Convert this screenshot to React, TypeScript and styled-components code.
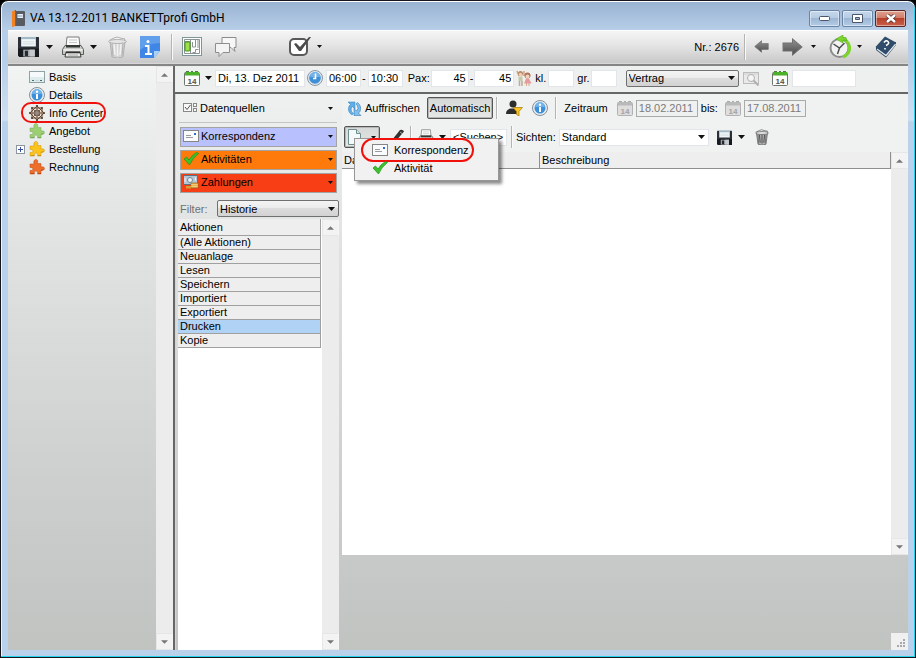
import React from "react";
import styled, { createGlobalStyle, css } from "styled-components";

const ui = '"Liberation Sans", Arial, sans-serif';

const GlobalStyle = createGlobalStyle`
  *, *::before, *::after { box-sizing: border-box; }
  html, body { margin: 0; padding: 0; background: #000; }
  body, button, input, select, table { font: 11px/14px ${ui}; color: #000; }
  button { padding: 0; border: 0; background: none; text-align: left; white-space: nowrap; cursor: pointer; }
  svg { display: block; flex: none; }
`;

/* ---------- window frame ---------- */

const Frame = styled.div`
  display: flex;
  flex-direction: column;
  height: 100vh;
  padding: 0 7px 7px;
  border: 1px solid #16161c;
  border-radius: 8px 8px 0 0;
  background: linear-gradient(#98b2d1 0, #b7cee8 29px, #b7cee8 60px, #cfe0f1 119px, #b9d1ea 121px);
  box-shadow: inset 0 1px #fff, inset -1px -1px #22d3ee, inset 1px 0 #eef6fc;
  overflow: hidden;
`;

const TitleBar = styled.header`
  display: flex;
  flex: none;
  align-items: center;
  height: 29px;
  padding: 5px 2px 0 4px;
`;

const Title = styled.h1`
  flex: 1;
  margin: 0 0 0 5px;
  font: 12px/16px Roboto, "Open Sans", sans-serif;
  white-space: nowrap;
`;

const CaptionButton = styled.button<{ $close?: boolean }>`
  display: grid;
  place-items: center;
  width: 31px;
  height: 17px;
  margin-left: 2px;
  border: 1px solid ${(p) => (p.$close ? "#5b2626" : "#6c84a3")};
  border-radius: 2px;
  background: ${(p) =>
    p.$close
      ? "linear-gradient(#e0a08f, #d07d68 48%, #b8402a 50%, #c9604a)"
      : "linear-gradient(#c5d8ec, #b6cbe3 48%, #9cb7d4 50%, #b4cce6)"};
  box-shadow: inset 0 0 0 1px rgba(255, 255, 255, 0.45);
`;

const Client = styled.div`
  display: flex;
  flex: 1;
  flex-direction: column;
  min-height: 0;
  background: #fff;
`;

const MainToolbar = styled.div`
  display: flex;
  flex: none;
  align-items: center;
  height: 36px;
  padding: 0 11px 2px 10px;
  border-top: 1px solid #fff;
  border-bottom: 2px solid #858585;
  background: linear-gradient(#f5f5f5, #e4e4e4 45%, #c9c9c9 95%, #dcdcdc);
`;

const IconButton = styled.button<{ $ml?: number }>`
  display: grid;
  place-items: center;
  flex: none;
  margin-left: ${(p) => p.$ml ?? 0}px;
`;

const Separator = styled.span<{ $ml?: number; $h?: number }>`
  flex: none;
  width: 1px;
  height: ${(p) => p.$h ?? 22}px;
  margin-left: ${(p) => p.$ml ?? 0}px;
  background: #b4b4b4;
  box-shadow: 1px 0 #fafafa;
`;

const Label = styled.span<{ $ml?: number; $dim?: boolean }>`
  flex: none;
  margin-left: ${(p) => p.$ml ?? 0}px;
  white-space: nowrap;
  color: ${(p) => (p.$dim ? "#707070" : "#000")};
`;

const RecordNumber = styled(Label)`
  margin-left: auto;
  margin-right: 5px;
`;

/* ---------- body ---------- */

const Body = styled.div`
  display: flex;
  flex: 1;
  min-height: 0;
  background: linear-gradient(#f1f4f3, #e5e8e7 20%, #c9cbca 80%, #c1c3c1);
`;

const TreePane = styled.nav`
  display: flex;
  flex: none;
  width: 165px;
`;

const Tree = styled.ul`
  flex: 1;
  margin: 0;
  padding: 2px 0 0;
  list-style: none;
`;

const TreeItem = styled.li`
  display: grid;
  grid-template-columns: 9px auto;
  gap: 4px;
  align-items: center;
  height: 18px;
  padding-left: 8px;
`;

const TreeLink = styled.button<{ $marked?: boolean }>`
  position: relative;
  display: flex;
  align-items: center;
  justify-self: start;
  gap: 4px;
  height: 18px;
  ${(p) =>
    p.$marked &&
    css`
      &::after {
        content: "";
        position: absolute;
        inset: -2px -3px -1px -8px;
        border: 2px solid #f0110c;
        border-radius: 10px;
      }
    `}
`;

const Expander = styled.button`
  display: grid;
  place-items: center;
  width: 9px;
  height: 9px;
  border: 1px solid #8c96a0;
  background: #fff;
`;

const ScrollTrack = styled.div`
  display: flex;
  flex: none;
  flex-direction: column;
  justify-content: space-between;
  width: 17px;
  background: #ececec;
`;

const ScrollButton = styled.button`
  display: grid;
  place-items: center;
  width: 17px;
  height: 17px;
  border: 1px solid #e6e6e6;
  border-right-color: #f6f6f6;
  background: #f3f3f3;
`;

const Main = styled.main`
  display: flex;
  flex: 1;
  flex-direction: column;
  min-width: 0;
  border-left: 2px solid #666;
`;

const DateBar = styled.div`
  display: flex;
  flex: none;
  align-items: center;
  height: 28px;
  padding: 0 8px 2px 9px;
  border-bottom: 2px solid #666;
  background: #eef0ef;
`;

const Field = styled.input<{ $w: number; $ml?: number; $right?: boolean; $framed?: boolean }>`
  flex: none;
  width: ${(p) => p.$w}px;
  height: 17px;
  margin: 0 0 0 ${(p) => p.$ml ?? 0}px;
  padding: 0 2px;
  border: 1px solid ${(p) => (p.$framed ? "#a9abaa" : "#e2e5e9")};
  border-radius: 0;
  outline: 0;
  background: ${(p) => (p.$framed ? "#eff0f0" : "#fff")};
  color: ${(p) => (p.$framed ? "#7b7b7b" : "#000")};
  text-align: ${(p) => (p.$right ? "right" : "left")};
  &::placeholder { color: #000; opacity: 1; }
`;

const SelectBox = styled.span<{ $w: number; $ml?: number }>`
  display: grid;
  flex: none;
  align-items: center;
  width: ${(p) => p.$w}px;
  margin-left: ${(p) => p.$ml ?? 0}px;
  & > * { grid-area: 1 / 1; }
  & > svg { justify-self: end; margin-right: 4px; pointer-events: none; }
`;

const Select = styled.select<{ $plain?: boolean }>`
  appearance: none;
  width: 100%;
  height: 17px;
  padding: 0 14px 0 2px;
  outline: 0;
  border: 1px solid ${(p) => (p.$plain ? "#e2e5e9" : "#707070")};
  border-radius: ${(p) => (p.$plain ? 0 : 2)}px;
  background: ${(p) => (p.$plain ? "#fff" : "linear-gradient(#f4f4f4, #ebebeb 48%, #dcdcdc 50%, #d2d2d2)")};
`;

const Panels = styled.div`
  display: flex;
  flex: 1;
  min-height: 0;
`;

/* ---------- source panel ---------- */

const SourcePanel = styled.section`
  display: flex;
  flex: none;
  flex-direction: column;
  width: 167px;
  padding: 0 3px 0 2px;
  border-left: 1px solid #d4d4d4;
`;

const SourceHead = styled.button`
  display: flex;
  flex: none;
  align-items: center;
  gap: 3px;
  height: 29px;
  margin: 0 2px 4px 1px;
  padding: 0 4px;
  border-bottom: 1px solid #c3c5c4;
`;

const SourceList = styled.div`
  display: grid;
  flex: none;
  gap: 3px;
  margin: 0 2px;
`;

const SourceButton = styled.button<{ $color: string }>`
  display: flex;
  align-items: center;
  gap: 2px;
  height: 20px;
  padding: 0 3px 2px 2px;
  border: 1px solid #a3a3a3;
  background: ${(p) => p.$color};
`;

const Grow = styled.span`
  flex: 1;
`;

const FilterRow = styled.label`
  display: flex;
  flex: none;
  align-items: center;
  justify-content: space-between;
  height: 19px;
  margin: 6px 0 1px 2px;
`;

const ActionArea = styled.div`
  display: flex;
  flex: 1;
  min-height: 0;
  background: #fff;
`;

const ActionTable = styled.table`
  flex: 1;
  align-self: flex-start;
  margin-right: 1px;
  border-collapse: separate;
  border-spacing: 0;
  border-right: 1px solid #a0a0a0;
  background: #eee;
`;

const ActionHead = styled.th`
  height: 17px;
  padding: 0 2px;
  border-bottom: 1px solid #a0a0a0;
  font-weight: normal;
  text-align: left;
`;

const ActionCell = styled.td<{ $selected: boolean }>`
  height: 14px;
  padding: 0 2px;
  border-bottom: 1px solid #a0a0a0;
  line-height: 13px;
  background: ${(p) => (p.$selected ? "#b0d2f5" : "#eee")};
`;

/* ---------- info center panel ---------- */

const InfoPanel = styled.section`
  display: flex;
  flex: 1;
  flex-direction: column;
  min-width: 0;
`;

const ToolRow = styled.div`
  display: flex;
  flex: none;
  align-items: center;
  height: 28px;
  padding-left: 2px;
  background: #f0f2f1;
`;

const EditRow = styled(ToolRow)`
  height: 30px;
`;

const TextButton = styled.button<{ $pressed?: boolean; $ml?: number }>`
  display: flex;
  flex: none;
  align-items: center;
  gap: 3px;
  height: 22px;
  margin-left: ${(p) => p.$ml ?? 0}px;
  padding: 0 3px;
  ${(p) =>
    p.$pressed &&
    css`
      padding: 0 2px;
      border: 1px solid #555;
      border-radius: 2px;
      background: linear-gradient(#d6d8d7, #e6e8e7);
      box-shadow: inset 0 0 0 1px #b5b5b5;
    `}
`;

const MenuAnchor = styled.div`
  position: relative;
  flex: none;
`;

const NewButton = styled(TextButton)`
  width: 36px;
  padding: 0 3px;
  justify-content: space-between;
`;

const Menu = styled.div`
  position: absolute;
  z-index: 2;
  top: 12px;
  left: 10px;
  width: 145px;
  padding: 2px 0 3px;
  border: 1px solid #979797;
  background: #f1f1f1;
  box-shadow: 3px 3px 3px rgba(0, 0, 0, 0.45);
`;

const MenuItem = styled.button<{ $marked?: boolean }>`
  position: relative;
  display: flex;
  align-items: center;
  gap: 6px;
  width: 100%;
  height: 18px;
  padding-left: 17px;
  ${(p) =>
    p.$marked &&
    css`
      &::after {
        content: "";
        position: absolute;
        inset: -3px 24px -3px 6px;
        border: 2px solid #f0110c;
        border-radius: 12px;
      }
    `}
`;

const ResultArea = styled.div`
  display: flex;
  flex: 1;
  min-height: 0;
`;

const ResultTableWrap = styled.div`
  flex: 1;
  min-width: 0;
  background: #fff;
`;

const ResultTable = styled.table`
  width: 100%;
  table-layout: fixed;
  border-collapse: separate;
  border-spacing: 0;
`;

const ResultHead = styled.th<{ $w?: number }>`
  width: ${(p) => (p.$w ? `${p.$w}px` : "auto")};
  height: 17px;
  padding: 0 2px;
  border-right: 1px solid #8f8f8f;
  border-bottom: 1px solid #8f8f8f;
  background: #eee;
  font-weight: normal;
  text-align: left;
`;

const Footer = styled.footer`
  display: flex;
  flex: none;
  align-items: flex-end;
  justify-content: flex-end;
  height: 95px;
`;

const Grip = styled.span`
  display: grid;
  place-items: end;
  width: 17px;
  height: 17px;
  padding: 2px;
  background: #f0f0f0;
`;

/* ---------- icons ---------- */

const Caret = ({ w = 7, color = "#111" }: { w?: number; color?: string }) => (
  <svg width={w} height={w === 5 ? 3 : 4} viewBox="0 0 8 4" preserveAspectRatio="none">
    <path d="M0 0h8L4 4z" fill={color} />
  </svg>
);

const ScrollArrow = ({ down }: { down?: boolean }) => (
  <svg width="7" height="4" viewBox="0 0 8 4">
    <path d={down ? "M0 0h8L4 4z" : "M0 4h8L4 0z"} fill="#777" />
  </svg>
);

const AppIcon = () => (
  <svg width="13" height="17" viewBox="0 0 13 17">
    <rect x="1" y="1" width="12" height="15" rx="1" fill="#585b61" />
    <path d="M0 1.5 3.5 0v16L0 17z" fill="#f58220" />
    <path d="M3.5 0v16" stroke="#b9510a" />
    <rect x="5.500" y="4" width="5.500" height="4" fill="#e9eef5" />
    <path d="M6 6h4.500" stroke="#7f9cc4" />
  </svg>
);

const Floppy = ({ s }: { s: number }) => (
  <svg width={s} height={s} viewBox="0 0 20 20">
    <path d="M0 1.500q0-.5.500-.5h19q.5 0 .5.500V20H1.500L0 18.500z" fill="#2b3038" />
    <path d="M0 12h20v8H1.500L0 18.500z" fill="#171a1f" />
    <rect x="3" y="1" width="14" height="9" fill="#f1f6f7" />
    <rect x="3" y="1" width="14" height="2" fill="#9fb9c6" />
    <path d="M4.500 5.500h11M4.500 7.500h11" stroke="#d5dfe2" />
    <rect x="5" y="13" width="11" height="6.500" fill="#a9aeb2" />
    <rect x="6.500" y="14" width="3" height="5" fill="#24292f" />
    <rect x="11" y="13" width="5" height="6.500" fill="#c6cacc" />
  </svg>
);

const Printer = ({ s }: { s: number }) => (
  <svg width={s} height={s} viewBox="0 0 22 22">
    <path d="M5 1h12l1 10H4z" fill="#fafafa" stroke="#787c7a" />
    <path d="M7 4h8M7 6.500h8" stroke="#c7c9c7" />
    <path d="M3 9.500h16l2.500 4v5H.5v-5z" fill="#c9ccc6" stroke="#5a5e5b" />
    <path d="M4 9h14v2.500H4z" fill="#343835" />
    <path d="M1.500 14h19" stroke="#f3f5f3" strokeWidth="1.500" />
    <path d="M4 16h14l1 5H3z" fill="#e9eae8" stroke="#3c403d" />
    <path d="M4 16.500h14" stroke="#2f322f" strokeWidth="1.500" />
    <path d="M6 19h10" stroke="#a9aca9" />
  </svg>
);

const Trash = ({ w, h, dark }: { w: number; h: number; dark?: boolean }) => {
  const line = dark ? "#5f5f5f" : "#b1b1b1";
  return (
    <svg width={w} height={h} viewBox="0 0 19 22">
      <path d="M2 6h15l-2 15q-5.500 2-11 0z" fill={dark ? "#b5b5b5" : "#d4d4d4"} stroke={line} />
      <path d="M6 8l1 11M9.500 8v12M13 8l-1 11" stroke={dark ? "#555" : "#f2f2f2"} strokeWidth="1.500" />
      <path d="M4 8l1 12M15 8l-1 12" stroke={line} />
      <path d="M2 4l4-2 3-1 3 1 5 1-1 2H3z" fill="#f3f3f3" stroke={line} />
      <ellipse cx="9.500" cy="5.500" rx="9" ry="2" fill="#e5e5e5" stroke={line} />
    </svg>
  );
};

const NoteInfo = () => (
  <svg width="20" height="22" viewBox="0 0 20 22">
    <path d="M0 0h20v15l-6 7H0z" fill="#3f86e6" />
    <path d="M0 0h20v7Q8 7 0 14z" fill="#619feb" />
    <path d="M20 15l-6 7v-7z" fill="#a8d0f8" />
    <path d="M5 10h3.500v8M5 18h7" stroke="#fff" strokeWidth="2" fill="none" />
    <circle cx="8" cy="5.500" r="1.500" fill="#fff" />
  </svg>
);

const LayoutIcon = () => (
  <svg width="20" height="19" viewBox="0 0 20 19">
    <rect x="0.500" y="0.500" width="19" height="18" fill="#fff" stroke="#7e9695" />
    <path d="M2.500 2.500h15v14h-15zM8.500 2v15M2 4.500h6M10.500 5v5h3V3M16 3v8M10.500 15.500h3v-3h3" fill="none" stroke="#8a9493" />
    <rect x="3" y="5" width="5" height="9" rx="1" fill="#9de04c" stroke="#3e8f19" />
  </svg>
);

const Chat = () => (
  <svg width="22" height="22" viewBox="0 0 22 22">
    <path d="M7 1.500h14v10h-2l1 4-4-4H7z" fill="#f7f7f7" stroke="#8d8d8d" />
    <path d="M.5 7.500h14v9H8l-4 4v-4H.5z" fill="#f3f3f3" stroke="#8d8d8d" />
  </svg>
);

const TaskCheck = () => (
  <svg width="22" height="21" viewBox="0 0 22 21">
    <rect x="1" y="3" width="17" height="16" rx="4" fill="#fff" stroke="#585858" strokeWidth="2" />
    <path d="M5 8l2-1 4 4 9-10h2l-10 14h-2z" fill="#4b4b4b" />
  </svg>
);

const Arrow = ({ right, w }: { right?: boolean; w: number }) => (
  <svg width={w} height={right ? 18 : 13} viewBox="0 0 20 18" preserveAspectRatio="none">
    <defs>
      <linearGradient id={right ? "arR" : "arL"} x1="0" y1="0" x2="0" y2="1">
        <stop offset="0" stopColor="#949494" />
        <stop offset="1" stopColor="#4a4a4a" />
      </linearGradient>
    </defs>
    <path
      d={right ? "M1 5h9V1l9 8-9 8v-4H1z" : "M19 5h-9V1L1 9l9 8v-4h9z"}
      fill={right ? "url(#arR)" : "url(#arL)"}
      stroke="#707070"
    />
  </svg>
);

const HistoryClock = () => (
  <svg width="22" height="24" viewBox="0 0 22 24">
    <circle cx="10.500" cy="13" r="9" fill="#f1f2f1" stroke="#8b8f8b" strokeWidth="2" />
    <path d="M12 3.500a9.500 9.500 0 0 1 2 18.500" fill="none" stroke="#7bd52c" strokeWidth="3" />
    <path d="M7 4l7-4v2.500h3l1 3-4-.5v3z" fill="#7bd52c" stroke="#4a9f12" strokeWidth="0.500" />
    <path d="M4.500 9l6 4 5-5M10.500 13l-2 6" stroke="#4d4d4d" strokeWidth="1.500" fill="none" />
  </svg>
);

const HelpBook = () => (
  <svg width="22" height="22" viewBox="0 0 22 22">
    <path d="M1 11v3l10 7.500L21 9V6z" fill="#29435f" />
    <path d="M2 13l9 6.500L20.500 8" fill="none" stroke="#dfe6ea" strokeWidth="1.500" />
    <path d="M10 .5l11 6-10 11.500L.5 11z" fill="#2f4c6a" />
    <path d="M9 6.500q2-3 4-1t-2 4M10 12v1.500" stroke="#fff" strokeWidth="1.600" fill="none" />
  </svg>
);

const BasisIcon = () => (
  <svg width="16" height="14" viewBox="0 0 16 14">
    <rect x="0.500" y="1.500" width="15" height="11" fill="#dfecee" stroke="#8fa3a6" />
    <path d="M1 2h14v5H1z" fill="#f6fafa" />
    <path d="M3 10.500h2M11 10.500h2" stroke="#4d6b6f" />
    <path d="M6.500 10.500h3" stroke="#c3d3d5" />
  </svg>
);

const InfoRound = () => (
  <svg width="16" height="16" viewBox="0 0 16 16">
    <circle cx="8" cy="8" r="7.500" fill="#eaeef1" stroke="#858f98" />
    <circle cx="8" cy="8" r="5.500" fill="#3c8fd9" />
    <path d="M3 7a5 5 0 0 1 10 0z" fill="#70b3ea" />
    <path d="M8 7v5" stroke="#fff" strokeWidth="2" />
    <circle cx="8" cy="4.800" r="1.200" fill="#fff" />
  </svg>
);

const Wheel = () => (
  <svg width="16" height="16" viewBox="0 0 16 16" fill="none" stroke="#5d4537" strokeWidth="0.900">
    <circle cx="8" cy="8" r="7" fill="#ece0d2" stroke="none" />
    <rect x="3" y="3" width="10" height="10" />
    <rect x="3" y="3" width="10" height="10" transform="rotate(45 8 8)" />
    <path d="M8 1v14M1 8h14M3 3l10 10M13 3L3 13" strokeWidth="0.700" />
    <circle cx="8" cy="8" r="3" />
    <circle cx="8" cy="8" r="1.200" fill="#fff" />
    <g fill="#5d4537" stroke="none">
      {[0, 45, 90, 135, 180, 225, 270, 315].map((a) => (
        <circle key={a} cx="8" cy="1" r="1.100" transform={`rotate(${a} 8 8)`} />
      ))}
    </g>
  </svg>
);

const Puzzle = ({ a, b }: { a: string; b: string }) => (
  <svg width="16" height="16" viewBox="0 0 16 16">
    <path
      d="M1 5h4q-1-4 1.500-4.500Q9.500 0 8.500 4.500h3.500v3.500q3.500-1 3.500 1.500t-3.500 1.500v4H8.500q1-3-1.500-3t-1.500 3H1v-3.500q3 .5 3-1.500T1 8.500z"
      fill={a}
      stroke={b}
      strokeWidth="0.500"
    />
    <path d="M2 14.500h3M9 14.500h3M12 11.500l2.500-1" stroke={b} />
  </svg>
);

const Calendar = ({ off }: { off?: boolean }) => (
  <svg width="16" height="17" viewBox="0 0 16 17">
    <rect x="0.500" y="2.500" width="15" height="13" rx="1" fill={off ? "#dedede" : "#fdfdfd"} stroke={off ? "#b1b1b1" : "#6f746f"} />
    <rect x="1" y="2" width="14" height="3.500" fill={off ? "#b9b9b9" : "#4bb02a"} />
    <path d="M2 1.500h3M7 1.500h2M11 1.500h3" stroke={off ? "#aaa" : "#4f7a45"} />
    <text x="8" y="14" textAnchor="middle" fontFamily="Liberation Sans, sans-serif" fontWeight="bold" fontSize="8" fill={off ? "#a3a3a3" : "#4f5350"}>
      14
    </text>
  </svg>
);

const Clock = () => (
  <svg width="16" height="16" viewBox="0 0 16 16">
    <circle cx="8" cy="8" r="7.500" fill="#dfe7ee" stroke="#8a98a5" />
    <circle cx="8" cy="8" r="5.800" fill="#3e8fd6" />
    <path d="M3 7a5 5 0 0 1 10 0z" fill="#72b2e8" />
    <path d="M8.500 3.500v5H6" stroke="#fff" strokeWidth="1.600" fill="none" />
  </svg>
);

const People = () => (
  <svg width="16" height="17" viewBox="0 0 16 17">
    <path d="M1 1l2 5M8 1v5" stroke="#d2a184" strokeWidth="1.500" />
    <circle cx="4.500" cy="3.500" r="2.500" fill="#b78a68" />
    <circle cx="4.500" cy="4.500" r="1.700" fill="#f2cdb2" />
    <path d="M2.500 6.500h4V11h-4z" fill="#c6c9a5" />
    <path d="M3.500 11v5M6 11v5" stroke="#b9ab96" strokeWidth="1.500" />
    <circle cx="11.500" cy="5.500" r="3" fill="#ab715b" />
    <circle cx="11.500" cy="6.500" r="2" fill="#f4cfb9" />
    <path d="M10 8.500h3l2.500 5H8z" fill="#e89a9d" />
    <path d="M10.500 13v3M13 13v3" stroke="#d8a58d" />
  </svg>
);

const SearchWindow = () => (
  <svg width="17" height="15" viewBox="0 0 17 15">
    <rect x="0.500" y="1.500" width="15" height="11" fill="#e9e9e9" stroke="#bcbcbc" />
    <path d="M1 3h14" stroke="#cfcfcf" />
    <circle cx="8" cy="7" r="3.500" fill="#f5f5f5" stroke="#b0b0b0" />
    <path d="M10.500 9.500l5 5" stroke="#b0b0b0" strokeWidth="2" />
  </svg>
);

const SourceIcon = () => (
  <svg width="14" height="10" viewBox="0 0 14 10" fill="#f8f8f8" stroke="#888">
    <rect x="0.500" y="0.500" width="8" height="8" />
    <path d="M2 4l2 2.500L7.500 2" fill="none" stroke="#555" />
    <rect x="10.500" y="0.500" width="3" height="3" />
    <rect x="10.500" y="5.500" width="3" height="3" />
  </svg>
);

const Mail = () => (
  <svg width="16" height="12" viewBox="0 0 16 12">
    <rect x="0.500" y="0.500" width="15" height="11" fill="#fafbfd" stroke="#858585" />
    <path d="M3 5.500h5M3 7.500h7" stroke="#9b9b9b" />
    <rect x="11" y="3" width="2" height="2" fill="#2f68d0" />
  </svg>
);

const GreenCheck = () => (
  <svg width="16" height="14" viewBox="0 0 16 14">
    <path d="M1 7l2.500-2L6 8Q9 3 13.500.5l2 1Q9.500 6 6.500 13z" fill="#3cc12c" stroke="#1c8f15" strokeWidth="0.700" />
  </svg>
);

const Money = () => (
  <svg width="16" height="14" viewBox="0 0 16 14">
    <rect x="0.500" y="0.500" width="14" height="9" fill="#b6c6d5" stroke="#5e7181" />
    <circle cx="7" cy="5" r="2.500" fill="#eef3f6" stroke="#71879a" />
    <path d="M2 3v4M12.500 2.500v3" stroke="#edf1f4" />
    <path d="M8 8h7v5H8z" fill="#e4b04a" stroke="#97681c" strokeWidth="0.700" />
    <path d="M3 11h5v2.500H3z" fill="#d59a34" />
    <path d="M8 9.700h7M8 11.400h7" stroke="#f8df98" strokeWidth="0.700" />
  </svg>
);

const Refresh = () => (
  <svg width="15" height="15" viewBox="0 0 15 15">
    <path d="M1 1h7v7L5.500 5.500 4 8q0 3 2.500 4.500L5 14Q0 11 2 5L3.500 3.500z" fill="#5faee8" stroke="#2d7cbd" strokeWidth="0.500" />
    <path d="M14 14.500H7v-7L9.500 10 11 7.500Q11 4.500 9 3L10.500 1.500Q15 5 13 10.500L11.500 12z" fill="#7cc0f0" stroke="#2467a5" strokeWidth="0.500" />
  </svg>
);

const UserFilter = () => (
  <svg width="17" height="16" viewBox="0 0 17 16">
    <circle cx="7" cy="4" r="3.500" fill="#2d2d2d" />
    <path d="M0 14q0-5 5-5.500h4q3 .5 4 5.500z" fill="#2d2d2d" />
    <path d="M7 7.500h9.500L13 11.500V16l-2.500-1.500v-3z" fill="#f9c623" stroke="#a57509" strokeWidth="0.700" />
  </svg>
);

const NewPage = () => (
  <svg width="13" height="16" viewBox="0 0 13 16">
    <path d="M0.500 0.500h8l4 4v11H.5z" fill="#f4fafa" stroke="#6f8e8f" />
    <path d="M8.500 .5v4h4" fill="#d3e4e4" stroke="#6f8e8f" />
  </svg>
);

const Pen = () => (
  <svg width="15" height="16" viewBox="0 0 15 16">
    <path d="M10 1q3-1 4 1.500L5 13l-4 2 1-4z" fill="#333" />
    <path d="M10 3l2 1.500" stroke="#aaa" />
  </svg>
);

const Min = () => (
  <svg width="11" height="5" viewBox="0 0 11 5">
    <rect x="0.500" y="0.500" width="10" height="4" rx="1" fill="#fff" stroke="#4b5768" />
  </svg>
);

const Max = () => (
  <svg width="11" height="9" viewBox="0 0 11 9">
    <path d="M.5.500h10v8H.5zM3.500 3.500v2h4v-2z" fill="#fff" fillRule="evenodd" stroke="#4b5768" />
  </svg>
);

const Close = () => (
  <svg width="12" height="9" viewBox="0 0 12 9">
    <path d="M2 1l8 7M10 1L2 8" stroke="#4d3030" strokeWidth="4" />
    <path d="M2 1l8 7M10 1L2 8" stroke="#fff" strokeWidth="2.400" />
  </svg>
);

/* ---------- data ---------- */

const treeItems = [
  { label: "Basis", icon: <BasisIcon /> },
  { label: "Details", icon: <InfoRound /> },
  { label: "Info Center", icon: <Wheel />, marked: true },
  { label: "Angebot", icon: <Puzzle a="#9bcf72" b="#7aa55c" /> },
  { label: "Bestellung", icon: <Puzzle a="#fbc41c" b="#d1910f" />, expandable: true },
  { label: "Rechnung", icon: <Puzzle a="#ee6e2c" b="#bd4b16" /> },
];

const sources = [
  { label: "Korrespondenz", color: "#b8c0fe", icon: <Mail /> },
  { label: "Aktivitäten", color: "#ff7a0a", icon: <GreenCheck /> },
  { label: "Zahlungen", color: "#f83e14", icon: <Money /> },
];

const actions = ["(Alle Aktionen)", "Neuanlage", "Lesen", "Speichern", "Importiert", "Exportiert", "Drucken", "Kopie"];

const Scrollbar = () => (
  <ScrollTrack>
    <ScrollButton aria-label="Nach oben"><ScrollArrow /></ScrollButton>
    <ScrollButton aria-label="Nach unten"><ScrollArrow down /></ScrollButton>
  </ScrollTrack>
);

export default function App() {
  return (
    <>
      <GlobalStyle />
      <Frame>
        <TitleBar>
          <AppIcon />
          <Title>VA 13.12.2011 BANKETTprofi GmbH</Title>
          <CaptionButton aria-label="Minimieren"><Min /></CaptionButton>
          <CaptionButton aria-label="Maximieren"><Max /></CaptionButton>
          <CaptionButton $close aria-label="Schließen"><Close /></CaptionButton>
        </TitleBar>

        <Client>
          <MainToolbar>
            <IconButton aria-label="Speichern"><Floppy s={21} /></IconButton>
            <IconButton $ml={7} aria-label="Speicheroptionen"><Caret /></IconButton>
            <IconButton $ml={9} aria-label="Drucken"><Printer s={22} /></IconButton>
            <IconButton $ml={6} aria-label="Druckoptionen"><Caret /></IconButton>
            <IconButton $ml={11} aria-label="Löschen"><Trash w={19} h={22} /></IconButton>
            <IconButton $ml={13} aria-label="Information"><NoteInfo /></IconButton>
            <Separator $ml={11} $h={26} />
            <IconButton $ml={10} aria-label="Layout"><LayoutIcon /></IconButton>
            <IconButton $ml={13} aria-label="Nachrichten"><Chat /></IconButton>
            <IconButton $ml={52} aria-label="Aufgaben"><TaskCheck /></IconButton>
            <IconButton $ml={6} aria-label="Aufgabenoptionen"><Caret w={5} /></IconButton>
            <RecordNumber>Nr.: 2676</RecordNumber>
            <Separator $h={26} />
            <IconButton $ml={9} aria-label="Zurück"><Arrow w={15} /></IconButton>
            <IconButton $ml={13} aria-label="Weiter"><Arrow right w={21} /></IconButton>
            <IconButton $ml={8} aria-label="Verlauf"><Caret w={5} /></IconButton>
            <IconButton $ml={13} aria-label="Historie"><HistoryClock /></IconButton>
            <IconButton $ml={6} aria-label="Historienoptionen"><Caret w={5} /></IconButton>
            <IconButton $ml={13} aria-label="Hilfe"><HelpBook /></IconButton>
          </MainToolbar>

          <Body>
            <TreePane>
              <Tree>
                {treeItems.map((t) => (
                  <TreeItem key={t.label}>
                    {t.expandable ? (
                      <Expander aria-label="Bestellung aufklappen">
                        <svg width="5" height="5" viewBox="0 0 5 5"><path d="M0 2.500h5M2.500 0v5" stroke="#3a4f9c" /></svg>
                      </Expander>
                    ) : (
                      <span />
                    )}
                    <TreeLink $marked={t.marked}>{t.icon}{t.label}</TreeLink>
                  </TreeItem>
                ))}
              </Tree>
              <Scrollbar />
            </TreePane>

            <Main>
              <DateBar>
                <IconButton aria-label="Kalender"><Calendar /></IconButton>
                <IconButton $ml={5} aria-label="Datum wählen"><Caret /></IconButton>
                <Field $w={90} $ml={3} aria-label="Datum" defaultValue="Di, 13. Dez 2011" />
                <IconButton $ml={2} aria-label="Uhrzeit"><Clock /></IconButton>
                <Field $w={35} $ml={3} aria-label="Beginn" defaultValue="06:00" />
                <Label $ml={1}>-</Label>
                <Field $w={35} $ml={2} aria-label="Ende" defaultValue="10:30" />
                <Label $ml={5} as="label" htmlFor="pax">Pax:</Label>
                <Field id="pax" $w={38} $ml={1} $right defaultValue="45" />
                <Label $ml={1}>-</Label>
                <Field $w={40} $ml={1} $right aria-label="Pax bis" defaultValue="45" />
                <IconButton $ml={2} aria-label="Kinder"><People /></IconButton>
                <Label $ml={3} as="label" htmlFor="kl">kl.</Label>
                <Field id="kl" $w={26} $ml={2} />
                <Label $ml={3} as="label" htmlFor="gr">gr.</Label>
                <Field id="gr" $w={26} $ml={1} />
                <SelectBox $w={113} $ml={9}>
                  <Select aria-label="Status"><option>Vertrag</option></Select>
                  <Caret />
                </SelectBox>
                <IconButton $ml={4} aria-label="Suchen"><SearchWindow /></IconButton>
                <IconButton $ml={12} aria-label="Optionsdatum wählen"><Calendar /></IconButton>
                <Field $w={64} $ml={4} aria-label="Optionsdatum" />
              </DateBar>

              <Panels>
                <SourcePanel>
                  <SourceHead>
                    <SourceIcon />Datenquellen<Grow /><Caret w={5} />
                  </SourceHead>
                  <SourceList>
                    {sources.map((s) => (
                      <SourceButton key={s.label} $color={s.color}>
                        {s.icon}{s.label}<Grow /><Caret w={5} />
                      </SourceButton>
                    ))}
                  </SourceList>
                  <FilterRow>
                    <Label $dim>Filter:</Label>
                    <SelectBox $w={122}>
                      <Select><option>Historie</option></Select>
                      <Caret />
                    </SelectBox>
                  </FilterRow>
                  <ActionArea>
                    <ActionTable>
                      <thead><tr><ActionHead>Aktionen</ActionHead></tr></thead>
                      <tbody>
                        {actions.map((a) => (
                          <tr key={a}><ActionCell $selected={a === "Drucken"}>{a}</ActionCell></tr>
                        ))}
                      </tbody>
                    </ActionTable>
                    <Scrollbar />
                  </ActionArea>
                </SourcePanel>

                <InfoPanel>
                  <ToolRow>
                    <TextButton><Refresh />Auffrischen</TextButton>
                    <TextButton $pressed $ml={4}>Automatisch</TextButton>
                    <Separator $ml={3} />
                    <IconButton $ml={9} aria-label="Benutzerfilter"><UserFilter /></IconButton>
                    <IconButton $ml={9} aria-label="Info"><InfoRound /></IconButton>
                    <Separator $ml={7} />
                    <Label $ml={8}>Zeitraum</Label>
                    <IconButton $ml={9} aria-label="Von wählen" disabled><Calendar off /></IconButton>
                    <Field $w={62} $ml={3} $framed disabled aria-label="Von" defaultValue="18.02.2011" />
                    <Label $ml={3}>bis:</Label>
                    <IconButton $ml={7} aria-label="Bis wählen" disabled><Calendar off /></IconButton>
                    <Field $w={62} $ml={3} $framed disabled aria-label="Bis" defaultValue="17.08.2011" />
                  </ToolRow>
                  <EditRow>
                    <MenuAnchor>
                      <NewButton $pressed aria-label="Neu"><NewPage /><Caret w={5} /></NewButton>
                      <Menu role="menu">
                        <MenuItem role="menuitem" $marked><Mail />Korrespondenz</MenuItem>
                        <MenuItem role="menuitem"><GreenCheck />Aktivität</MenuItem>
                      </Menu>
                    </MenuAnchor>
                    <IconButton $ml={10} aria-label="Bearbeiten"><Pen /></IconButton>
                    <Separator $ml={5} />
                    <IconButton $ml={7} aria-label="Liste drucken"><Printer s={16} /></IconButton>
                    <IconButton $ml={5} aria-label="Druckoptionen der Liste"><Caret /></IconButton>
                    <Field $w={57} $ml={4} aria-label="Suchen" placeholder="<Suchen>" />
                    <Separator $ml={4} />
                    <Label $ml={4} as="label" htmlFor="view">Sichten:</Label>
                    <SelectBox $w={150} $ml={3}>
                      <Select id="view" $plain><option>Standard</option></Select>
                      <Caret />
                    </SelectBox>
                    <IconButton $ml={8} aria-label="Sicht speichern"><Floppy s={15} /></IconButton>
                    <IconButton $ml={6} aria-label="Sichtoptionen"><Caret /></IconButton>
                    <IconButton $ml={10} aria-label="Sicht löschen"><Trash w={14} h={16} dark /></IconButton>
                  </EditRow>
                  <ResultArea>
                    <ResultTableWrap>
                      <ResultTable>
                        <thead>
                          <tr>
                            <ResultHead $w={198}>Datum</ResultHead>
                            <ResultHead>Beschreibung</ResultHead>
                          </tr>
                        </thead>
                      </ResultTable>
                    </ResultTableWrap>
                    <Scrollbar />
                  </ResultArea>
                  <Footer>
                    <Grip>
                      <svg width="9" height="9" viewBox="0 0 9 9" fill="#a9a9a9">
                        <path d="M6 0h2v2H6zM3 3h2v2H3zM6 3h2v2H6zM0 6h2v2H0zM3 6h2v2H3zM6 6h2v2H6z" />
                      </svg>
                    </Grip>
                  </Footer>
                </InfoPanel>
              </Panels>
            </Main>
          </Body>
        </Client>
      </Frame>
    </>
  );
}
